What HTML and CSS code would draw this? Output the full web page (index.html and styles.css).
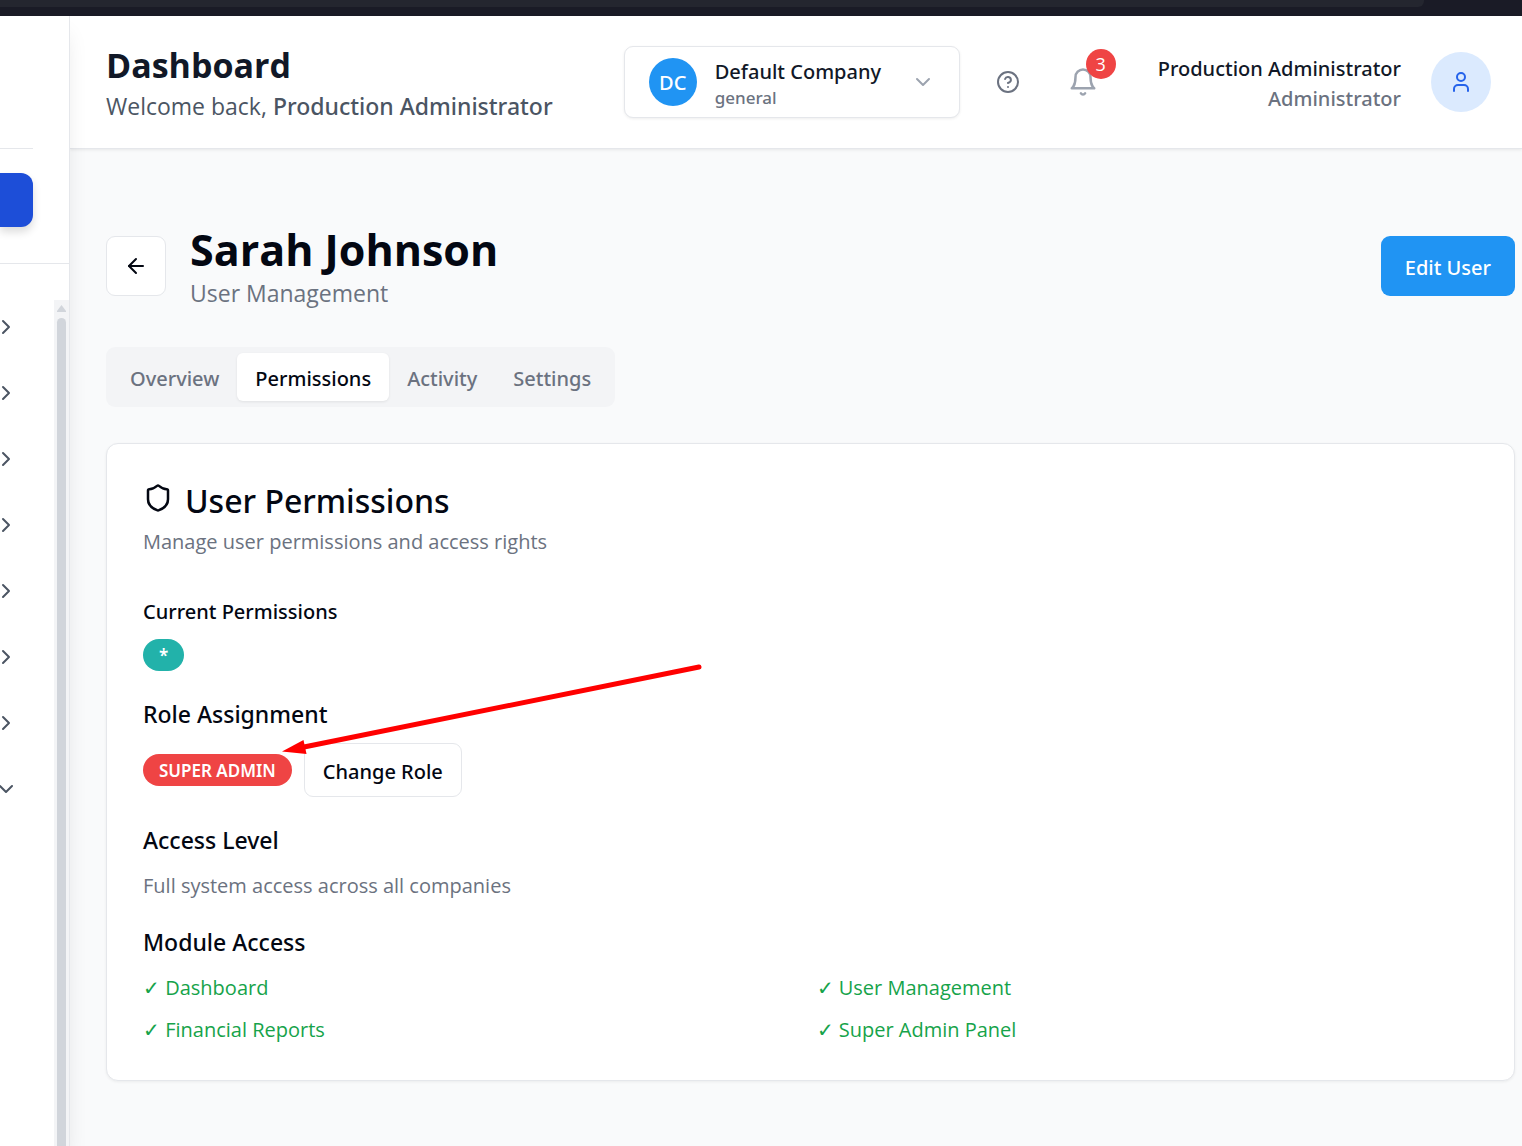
FILE: index.html
```html
<!DOCTYPE html>
<html lang="en">
<head>
<meta charset="utf-8">
<title>Dashboard</title>
<link rel="stylesheet" href="styles.css">
</head>
<body>
<div class="window-edge"><div class="address-bar"></div></div>
<div class="app">
  <aside class="sidebar">
    <div class="sidebar-brand"></div>
    <div class="sidebar-current"><button class="sidebar-active" aria-label="Current section"></button></div>
    <div class="sidebar-scroll">
      <nav class="sidebar-nav" aria-label="Sections">
        <button class="nav-toggle" aria-label="Expand section 1"><svg class="icon" viewBox="0 0 24 24"><path d="m9 18 6-6-6-6"/></svg></button>
        <button class="nav-toggle" aria-label="Expand section 2"><svg class="icon" viewBox="0 0 24 24"><path d="m9 18 6-6-6-6"/></svg></button>
        <button class="nav-toggle" aria-label="Expand section 3"><svg class="icon" viewBox="0 0 24 24"><path d="m9 18 6-6-6-6"/></svg></button>
        <button class="nav-toggle" aria-label="Expand section 4"><svg class="icon" viewBox="0 0 24 24"><path d="m9 18 6-6-6-6"/></svg></button>
        <button class="nav-toggle" aria-label="Expand section 5"><svg class="icon" viewBox="0 0 24 24"><path d="m9 18 6-6-6-6"/></svg></button>
        <button class="nav-toggle" aria-label="Expand section 6"><svg class="icon" viewBox="0 0 24 24"><path d="m9 18 6-6-6-6"/></svg></button>
        <button class="nav-toggle" aria-label="Expand section 7"><svg class="icon" viewBox="0 0 24 24"><path d="m9 18 6-6-6-6"/></svg></button>
        <button class="nav-toggle" aria-label="Collapse section 8"><svg class="icon" viewBox="0 0 24 24"><path d="m6 9 6 6 6-6"/></svg></button>
      </nav>
      <div class="scrollbar">
        <svg class="scroll-arrow" viewBox="0 0 9 7"><path d="M4.500 0 9 6v1H0V6z"/></svg>
        <div class="scroll-thumb"></div>
      </div>
    </div>
  </aside>

  <div class="main">
    <header class="topbar">
      <div class="greeting">
        <h2 class="topbar-title">Dashboard</h2>
        <p class="welcome">Welcome back, <strong>Production Administrator</strong></p>
      </div>
      <div class="topbar-tools">
        <button class="company">
          <span class="company-logo">DC</span>
          <span class="company-text">
            <span class="company-name">Default Company</span>
            <span class="company-type">general</span>
          </span>
          <svg class="icon company-chevron" viewBox="0 0 24 24"><path d="m6 9 6 6 6-6"/></svg>
        </button>
        <button class="tool help" aria-label="Help"><svg class="icon" viewBox="0 0 24 24"><circle cx="12" cy="12" r="10"/><path d="M9.090 9a3 3 0 0 1 5.830 1c0 2-3 3-3 3"/><path d="M12 17h.01"/></svg></button>
        <button class="tool bell" aria-label="Notifications"><svg class="icon icon-lg" viewBox="0 0 24 24"><path d="M6 8a6 6 0 0 1 12 0c0 7 3 9 3 9H3s3-2 3-9"/><path d="M10.300 21a1.940 1.940 0 0 0 3.400 0"/></svg><span class="count">3</span></button>
        <div class="account">
          <div class="account-text">
            <div class="account-name">Production Administrator</div>
            <div class="account-role">Administrator</div>
          </div>
          <button class="avatar" aria-label="Account"><svg class="icon" viewBox="0 0 24 24"><path d="M19 21v-2a4 4 0 0 0-4-4H9a4 4 0 0 0-4 4v2"/><circle cx="12" cy="7" r="4"/></svg></button>
        </div>
      </div>
    </header>

    <main class="content">
      <div class="page-head">
        <button class="back" aria-label="Back"><svg class="icon" viewBox="0 0 24 24"><path d="m12 19-7-7 7-7"/><path d="M19 12H5"/></svg></button>
        <div class="page-names">
          <h1 class="page-title">Sarah Johnson</h1>
          <p class="page-subtitle">User Management</p>
        </div>
        <button class="edit">Edit User</button>
      </div>

      <div class="tabs" role="tablist">
        <button class="tab" role="tab" aria-selected="false">Overview</button>
        <button class="tab tab-active" role="tab" aria-selected="true">Permissions</button>
        <button class="tab" role="tab" aria-selected="false">Activity</button>
        <button class="tab" role="tab" aria-selected="false">Settings</button>
      </div>

      <section class="card">
        <div class="card-head">
          <h3 class="card-title"><svg class="icon icon-lg" viewBox="0 0 24 24"><path d="M20 13c0 5-3.500 7.500-7.660 8.950a1 1 0 0 1-.67-.01C7.500 20.500 4 18 4 13V6a1 1 0 0 1 1-1c2 0 4.500-1.200 6.240-2.720a1.170 1.170 0 0 1 1.520 0C14.510 3.810 17 5 19 5a1 1 0 0 1 1 1z"/></svg><span class="card-title-text">User Permissions</span></h3>
          <p class="muted">Manage user permissions and access rights</p>
        </div>
        <div class="sections">
          <div class="section">
            <h4 class="label">Current Permissions</h4>
            <div class="permission-list"><span class="badge badge-teal">*</span></div>
          </div>
          <div class="section section-role">
            <h4 class="heading">Role Assignment</h4>
            <div class="role-row"><span class="badge badge-red">SUPER ADMIN</span><button class="change">Change Role</button></div>
          </div>
          <div class="section">
            <h4 class="heading">Access Level</h4>
            <p class="muted">Full system access across all companies</p>
          </div>
          <div class="section">
            <h4 class="heading">Module Access</h4>
            <ul class="modules">
              <li>✓ Dashboard</li>
              <li>✓ User Management</li>
              <li>✓ Financial Reports</li>
              <li>✓ Super Admin Panel</li>
            </ul>
          </div>
        </div>
        <svg class="callout" viewBox="0 0 424 92" aria-hidden="true"><path class="callout-line" d="M417 5 22 85"/><path class="callout-head" d="M0 89.500 21.500 78 24.500 92z"/></svg>
      </section>
    </main>
  </div>
</div>
</body>
</html>
```
FILE: styles.css
```css
*, *::before, *::after { box-sizing: border-box; }
body {
  margin: 0;
  min-height: 100vh;
  display: flex;
  flex-direction: column;
  font-family: "Open Sans", "Noto Sans", sans-serif;
  font-size: 20px;
  line-height: 30px;
  color: #030712;
  background: #f9fafb;
}
h1, h2, h3, h4, p, ul { margin: 0; padding: 0; }
button { font: inherit; color: inherit; background: none; border: 0; padding: 0; margin: 0; cursor: pointer; }

/* Medium-weight text */
.welcome strong, .company, .account-text, .edit, .tab, .card-title, .label, .heading, .badge, .change {
  font-family: "Noto Sans", "Open Sans", sans-serif;
  font-weight: 500;
}

.icon {
  display: block;
  flex: none;
  width: 24px;
  height: 24px;
  fill: none;
  stroke: currentColor;
  stroke-width: 2;
  stroke-linecap: round;
  stroke-linejoin: round;
}
.icon-lg { width: 30px; height: 30px; }

.window-edge { height: 16px; background: #1a1b26; flex: none; }
.address-bar { height: 7px; margin-right: 98px; background: #24262f; border-radius: 0 0 6px 0; }

.app { flex: 1; display: flex; }

/* Sidebar */
.sidebar {
  position: relative;
  z-index: 1;
  flex: none;
  width: 70px;
  display: flex;
  flex-direction: column;
  background: #fff;
  border-right: 1px solid #e5e7eb;
  box-shadow: 0 15px 22px -4px rgba(0, 0, 0, 0.1);
}
.sidebar-brand { height: 133px; margin-right: 36px; border-bottom: 1px solid #e5e7eb; }
.sidebar-current { padding: 24px 36px 36px 0; border-bottom: 1px solid #e5e7eb; }
.sidebar-active {
  display: block;
  width: 100%;
  height: 54px;
  background: #1d4ed8;
  border-radius: 0 12px 12px 0;
  box-shadow: 0 5px 8px rgba(0, 0, 0, 0.14);
}
.sidebar-scroll { flex: 1; display: flex; margin-top: 36px; }
.sidebar-nav { flex: 1; min-width: 0; overflow: hidden; display: flex; flex-direction: column; gap: 12px; color: #4b5563; }
.nav-toggle { height: 54px; display: flex; align-items: center; margin-left: -6px; }
.scrollbar { width: 15px; padding: 5px 3px 0; background: #f3f4f6; display: flex; flex-direction: column; gap: 6px; }
.scroll-arrow { width: 9px; height: 7px; fill: #d1d5db; }
.scroll-thumb { flex: 1; background: #d1d5db; border-radius: 5px 5px 0 0; }

/* Header */
.main { flex: 1; min-width: 0; }
.topbar {
  display: flex;
  align-items: center;
  justify-content: space-between;
  min-height: 133px;
  padding: 0 31px 0 36px;
  background: #fff;
  border-bottom: 1px solid #e5e7eb;
  box-shadow: 0 1px 3px rgba(0, 0, 0, 0.08);
}
.greeting { padding-top: 3px; }
.topbar-title { font-size: 34px; line-height: 45px; font-weight: 700; color: #111827; }
.welcome { font-size: 23px; line-height: 36px; color: #4b5563; }
.topbar-tools { display: flex; align-items: center; gap: 24px; white-space: nowrap; }
.company {
  display: flex;
  align-items: center;
  width: 336px;
  height: 72px;
  padding: 0 24px;
  gap: 18px;
  text-align: left;
  background: #fff;
  border: 1px solid #e5e7eb;
  border-radius: 9px;
  box-shadow: 0 1px 3px rgba(0, 0, 0, 0.07);
}
.company-logo {
  flex: none;
  width: 48px;
  height: 48px;
  line-height: 50px;
  text-align: center;
  color: #fff;
  background: #2094f3;
  border-radius: 50%;
}
.company-text { flex: 1; display: flex; flex-direction: column; padding-top: 3px; }
.company-name { line-height: 28px; color: #111827; }
.company-type { font-size: 17px; line-height: 24px; color: #6b7280; }
.company-chevron { color: #9ca3af; }
.tool { position: relative; display: flex; align-items: center; justify-content: center; height: 54px; }
.help { width: 48px; color: #6b7280; }
.bell { width: 54px; color: #9ca3af; }
.count {
  position: absolute;
  top: -6px;
  right: -6px;
  width: 30px;
  height: 30px;
  font-size: 18px;
  text-align: center;
  color: #fff;
  background: #ef4444;
  border-radius: 50%;
}
.account { display: flex; align-items: center; gap: 30px; margin-left: 24px; }
.account-text { text-align: right; padding-top: 3px; }
.account-name { color: #111827; }
.account-role { color: #6b7280; }
.avatar {
  flex: none;
  display: flex;
  align-items: center;
  justify-content: center;
  width: 60px;
  height: 60px;
  color: #2563eb;
  background: #dbeafe;
  border-radius: 50%;
}

/* Page */
.content { padding: 72px 7px 66px 36px; display: flex; flex-direction: column; gap: 36px; }
.page-head { display: flex; align-items: center; gap: 24px; }
.back {
  display: flex;
  align-items: center;
  justify-content: center;
  width: 60px;
  height: 60px;
  background: #fff;
  border: 1px solid #e5e7eb;
  border-radius: 9px;
}
.page-names { flex: 1; padding-top: 4px; }
.page-title { font-size: 43px; line-height: 50px; font-weight: 700; }
.page-subtitle { font-size: 23px; line-height: 36px; color: #6b7280; }
.edit { height: 60px; padding: 3px 24px 0; color: #fff; background: #2094f3; border-radius: 9px; }
.tabs {
  align-self: flex-start;
  display: flex;
  height: 60px;
  padding: 6px;
  background: #f3f4f6;
  border-radius: 9px;
}
.tab { padding: 3px 18px 0; color: #6b7280; border-radius: 6px; }
.tab-active { color: #030712; background: #fff; box-shadow: 0 1px 3px rgba(0, 0, 0, 0.08); }

/* Permissions card */
.card {
  position: relative;
  padding: 33px 36px 35px;
  background: #fff;
  border: 1px solid #e5e7eb;
  border-radius: 12px;
  box-shadow: 0 1px 3px rgba(0, 0, 0, 0.06);
}
.card-head { display: flex; flex-direction: column; gap: 8px; margin-bottom: 40px; }
.card-title { display: flex; align-items: center; gap: 12px; font-size: 32px; line-height: 42px; }
.card-title-text { padding-top: 3px; margin-bottom: -3px; }
.muted { color: #6b7280; }
.sections { display: flex; flex-direction: column; gap: 24px; }
.section { display: flex; flex-direction: column; gap: 12px; }
.label { font-size: 20px; }
.heading { font-size: 23px; line-height: 34px; padding-bottom: 2px; }
.section-role { gap: 10px; }
.permission-list { display: flex; padding-bottom: 2px; }
.badge { height: 32px; padding: 0 16px; font-size: 17px; line-height: 33px; font-weight: 600; color: #fff; border-radius: 16px; }
.badge-teal { background: #22b2aa; }
.badge-red { background: #ef4444; }
.role-row { display: flex; align-items: center; gap: 12px; padding-bottom: 2px; }
.change { height: 54px; padding: 3px 18px 0; background: #fff; border: 1px solid #e5e7eb; border-radius: 9px; }
.modules { display: grid; grid-template-columns: 1fr 1fr; gap: 12px; list-style: none; color: #16a34a; }
.callout { position: absolute; left: 175px; top: 218px; width: 424px; height: 92px; pointer-events: none; }
.callout-line { fill: none; stroke: #f00; stroke-width: 5; stroke-linecap: round; }
.callout-head { fill: #f00; }
```
